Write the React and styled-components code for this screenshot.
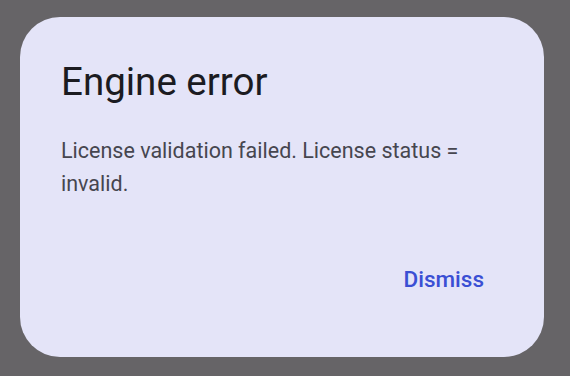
import React from "react";
import styled, { createGlobalStyle } from "styled-components";

const GlobalStyle = createGlobalStyle`
  html, body {
    margin: 0;
    padding: 0;
    background: #666467;
    font-family: Roboto, "Noto Sans", sans-serif;
  }
`;

const Scrim = styled.div`
  width: 570px;
  height: 376px;
  box-sizing: border-box;
  padding: 17px 0 0 20px;
  background: #666467;
`;

const Dialog = styled.div`
  width: 524px;
  height: 340px;
  box-sizing: border-box;
  padding: 42px 40px 45px 41px;
  background: #e4e4f8;
  border-radius: 40px;
  display: flex;
  flex-direction: column;
`;

const Title = styled.h1`
  margin: 0;
  font-size: 38.5px;
  font-weight: 400;
  line-height: 46px;
  color: #1b1b21;
`;

const Message = styled.p`
  margin: 29px 0 0;
  font-size: 21.5px;
  line-height: 33px;
  color: #46464f;
`;

const Actions = styled.div`
  margin-top: auto;
  display: flex;
  justify-content: flex-end;
`;

const TextButton = styled.button`
  border: none;
  background: none;
  padding: 0 20px;
  height: 66px;
  font-family: inherit;
  font-size: 22.5px;
  font-weight: 500;
  color: #3a4fd4;
  cursor: pointer;
`;

export default function App() {
  return (
    <Scrim>
      <GlobalStyle />
      <Dialog>
        <Title>Engine error</Title>
        <Message>License validation failed. License status = invalid.</Message>
        <Actions>
          <TextButton>Dismiss</TextButton>
        </Actions>
      </Dialog>
    </Scrim>
  );
}
